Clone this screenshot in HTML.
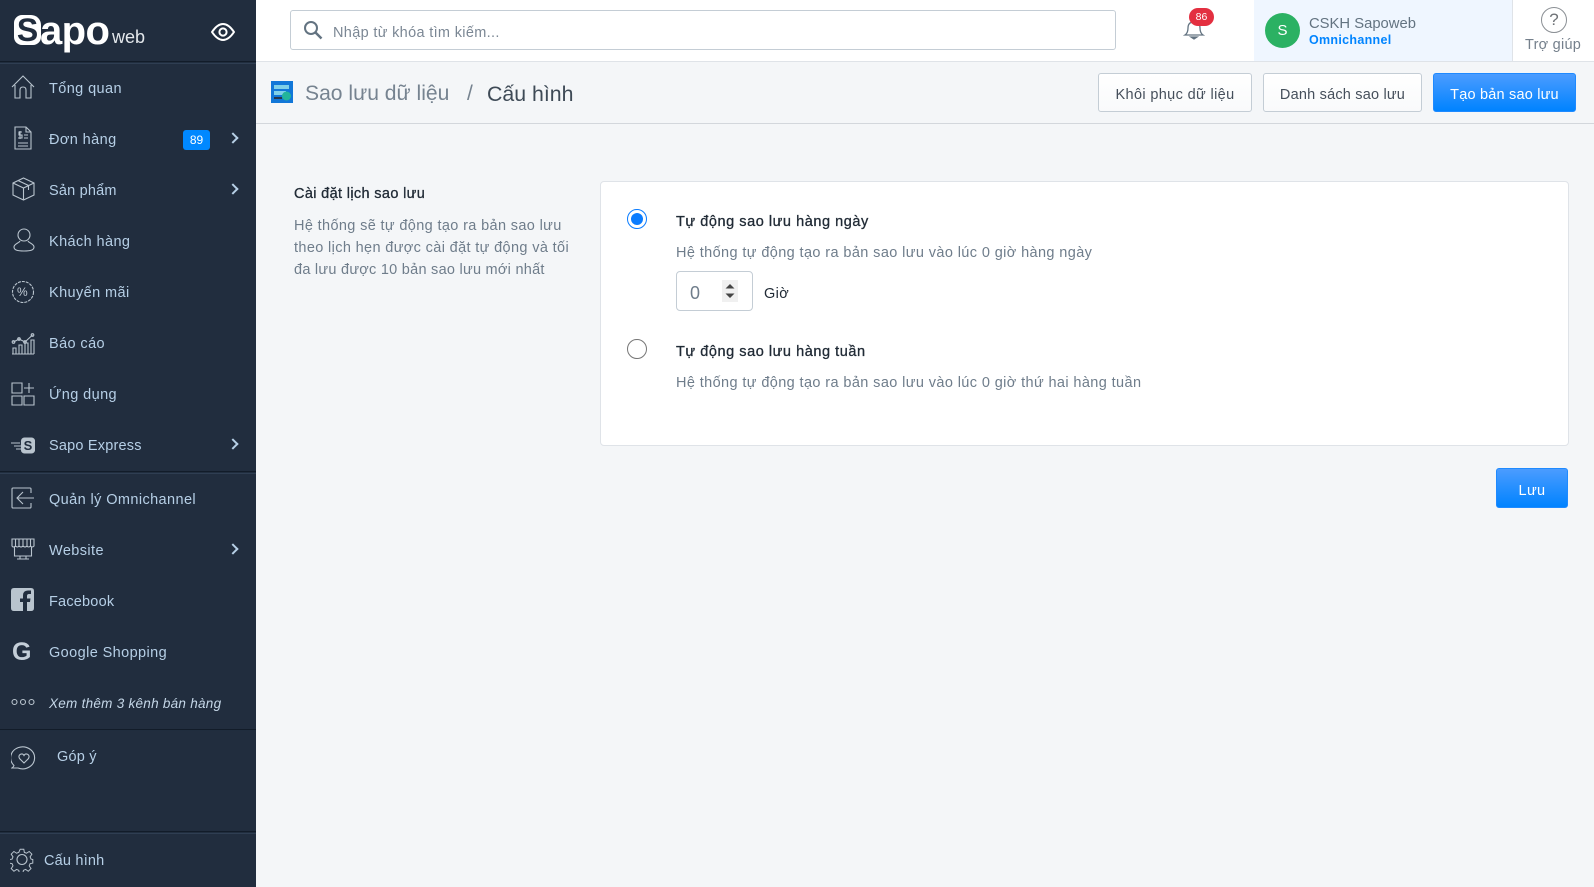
<!DOCTYPE html>
<html lang="vi"><head><meta charset="utf-8"><title>Sao lưu dữ liệu</title>
<style>
html,body{margin:0;padding:0}
body{width:1594px;height:887px;overflow:hidden;background:#f4f6f8;position:relative;font-family:"Liberation Sans","Noto Sans CJK SC",sans-serif;font-size:14.5px;color:#212b36;letter-spacing:.39px}
.t{position:absolute;white-space:nowrap;line-height:20px;height:20px}
.box{position:absolute;box-sizing:border-box;letter-spacing:0}
#side{position:absolute;left:0;top:0;width:256px;height:887px;background:#212d3e}
#side .t{left:49px;color:#b6cfe6;font-size:14.5px;letter-spacing:.4px;margin-top:1px}
#side svg{position:absolute;fill:none;stroke:#b9c4ce;stroke-width:1.1}
.chev{position:absolute;left:229px;width:6px;height:6px;border-top:2px solid #b6cfe6;border-right:2px solid #b6cfe6;transform:rotate(45deg)}
.div{position:absolute;left:0;width:256px;height:3px;background:linear-gradient(#121c29 0 1.5px,#2f3e52 1.5px)}
.btn{position:absolute;box-sizing:border-box;top:73px;height:39px;border-radius:3px;border:1px solid #c4cdd5;background:linear-gradient(#fff,#f9fafb);text-align:center;line-height:42px;color:#454f5b;font-size:14.5px}
.blue{background:linear-gradient(#4b9cff,#0083ff);border:1px solid #1f8aff;color:#fff}
.g{color:#6f7d8b}
.m{font-size:14.5px;-webkit-text-stroke:.3px #212b36;letter-spacing:.55px}
</style></head><body>
<div id="side">
 <div class="box" style="left:14px;top:15px;width:27px;height:30px;background:#fff;border-radius:8px 10px 8px 8px;color:#212d3e;font:bold 32px/30px 'Liberation Sans',sans-serif;text-align:center">S</div>
 <div class="t" style="left:40px!important;top:13px;margin:0;font:bold 40px/36px 'Liberation Sans',sans-serif;height:36px;letter-spacing:-.6px"><span style="color:#fff">apo</span></div>
 <div class="t" style="left:112px!important;top:26px;font-size:18px;letter-spacing:0"><span style="color:#e4e8ec">web</span></div>
 <svg style="left:211px;top:22px;stroke:#fff;stroke-width:2" width="24" height="20" viewBox="0 0 24 20"><path d="M1 10C5 4 9 2 12 2s7 2 11 8c-4 6-8 8-11 8s-7-2-11-8z"/><circle cx="12" cy="10" r="3.6"/></svg>
 <div class="div" style="top:61px"></div>

 <svg style="left:11px;top:75px" width="24" height="24" viewBox="0 0 24 24"><path d="M1 12L12 1l11 11M4 10v13h5v-8q0-3 3-3t3 3v8h5V10"/></svg>
 <div class="t" style="top:78px">Tổng quan</div>
 <svg style="left:14px;top:126px" width="18" height="24" viewBox="0 0 18 24"><path d="M1 1h11l5 5v17H1zM12 1v5h5M4 17h10M4 20h10M10 9h4M10 12h4M8 6H5v3h3v3H4M6 5v8"/></svg>
 <div class="t" style="top:129px">Đơn hàng</div>
 <div class="box" style="left:183px;top:130px;width:27px;height:20px;background:#0088ff;border-radius:3px;color:#fff;font-size:12px;line-height:20px;text-align:center">89</div>
 <div class="chev" style="top:134px"></div>
 <svg style="left:12px;top:177px" width="23" height="24" viewBox="0 0 23 24"><path d="M11.500 1L22 6v12l-10.500 5L1 18V6zM1 6l10.500 5L22 6M11.500 11v12M6 3.500l10.500 5V13"/></svg>
 <div class="t" style="top:180px;letter-spacing:.2px">Sản phẩm</div>
 <div class="chev" style="top:185px"></div>
 <svg style="left:13px;top:228px" width="22" height="24" viewBox="0 0 22 24"><circle cx="11" cy="7" r="6"/><path d="M7 13c-1 2-6 3-6 6 0 3 3 4 10 4s10-1 10-4c0-3-5-4-6-6"/></svg>
 <div class="t" style="top:231px">Khách hàng</div>
 <svg style="left:11px;top:280px" width="24" height="24" viewBox="0 0 24 24"><circle cx="12" cy="12" r="10.500" stroke-dasharray="3 1"/></svg>
 <div class="t" style="left:17px!important;top:281px;font-size:12px;letter-spacing:0"><span style="color:#c4ced8">%</span></div>
 <div class="t" style="top:282px">Khuyến mãi</div>
 <svg style="left:11px;top:331px" width="24" height="24" viewBox="0 0 24 24"><path d="M1 23h22M2 23v-6h3v6M8 23v-9h3v9M14 23V12h3v11M20 23V9h3v14M2.500 11L8 8l6 3 7.500-7"/><circle cx="2.500" cy="11" r="1.300"/><circle cx="8" cy="8" r="1.300"/><circle cx="14" cy="11" r="1.300"/><circle cx="21.500" cy="4" r="1.300"/></svg>
 <div class="t" style="top:333px">Báo cáo</div>
 <svg style="left:11px;top:382px" width="24" height="24" viewBox="0 0 24 24"><path d="M1 1h10v10H1zM1 14h10v9H1zM13 14h10v9H13zM13 6h10M18 1v10"/></svg>
 <div class="t" style="top:384px">Ứng dụng</div>
 <svg style="left:11px;top:437px" width="24" height="17" viewBox="0 0 24 17"><path d="M0 6h9M3 9h7M5 12h5"/><rect x="10.500" y="1" width="13" height="15" rx="3" fill="#b9c4ce"/></svg>
 <div class="box" style="left:21px;top:437px;width:14px;height:17px;color:#212d3e;font:bold 13px/17px 'Liberation Sans',sans-serif;text-align:center">S</div>
 <div class="t" style="top:435px;letter-spacing:.2px">Sapo Express</div>
 <div class="chev" style="top:440px"></div>
 <div class="div" style="top:471px"></div>
 <svg style="left:11px;top:487px" width="24" height="22" viewBox="0 0 24 22"><path d="M20 6V2q0-1-1-1H2Q1 1 1 2v18q0 1 1 1h17q1 0 1-1v-4M23 11H6M12 5l-6 6 6 6"/></svg>
 <div class="t" style="top:489px">Quản lý Omnichannel</div>
 <svg style="left:11px;top:537px" width="24" height="24" viewBox="0 0 24 24"><path d="M1 2h22v7q-2 2-3.500 0-2 2-3.500 0-2 2-4 0-2 2-4 0-1.500 2-3.500 0Q2 11 1 9zM4.500 2v7M8 2v7M12 2v7M16 2v7M19.500 2v7M3.500 10v9h17v-9M6 22h12M9 19v3M15 19v3"/></svg>
 <div class="t" style="top:540px">Website</div>
 <div class="chev" style="top:545px"></div>
 <svg style="left:11px;top:588px;stroke:none" width="23" height="23" viewBox="0 0 23 23"><path fill="#b9c4ce" d="M3 0h17q3 0 3 3v17q0 3-3 3h-4v-9h3l.5-3.500H16V8q0-2 2-2h2V2.500h-3q-5 0-5 5v3H9V14h3v9H3q-3 0-3-3V3q0-3 3-3z"/></svg>
 <div class="t" style="top:591px;letter-spacing:.2px">Facebook</div>
 <div class="t" style="left:12px!important;top:639px;height:26px;margin:0;letter-spacing:0;font:bold 25px/26px 'Liberation Sans',sans-serif"><span style="color:#c4ced8">G</span></div>
 <div class="t" style="top:642px">Google Shopping</div>
 <svg style="left:11px;top:697px" width="24" height="10" viewBox="0 0 24 10"><circle cx="3.500" cy="5" r="2.500"/><circle cx="12" cy="5" r="2.500"/><circle cx="20.500" cy="5" r="2.500"/></svg>
 <div class="t" style="top:693px;font-style:italic;font-size:13.500px;letter-spacing:.27px;color:#c5d7e8">Xem thêm 3 kênh bán hàng</div>
 <div class="div" style="top:729px;height:2px"></div>
 <svg style="left:11px;top:745px" width="26" height="26" viewBox="0 0 26 26"><path d="M3 20.500A12 11 0 1 1 7 23H1q1.500-1 2-2.500z"/><path d="M13 18l-4.500-4.500q-1.500-3 1-4.200 2.300-1 3.500 1.200 1.200-2.200 3.500-1.200 2.500 1.200 1 4.200z"/></svg>
 <div class="t" style="left:57px!important;top:746px;letter-spacing:.2px">Góp ý</div>
 <div class="div" style="top:831px"></div>
 <svg style="left:10px;top:847px" width="24" height="25" viewBox="0 0 24 25"><circle cx="12" cy="12.500" r="5"/><path d="M10 1h4l.6 3.500 2.400 1 3-2 3 3-2 3 1 2.500 2 .5v4l-3 .6-1 2.400 2 3-3 3-3-2-2.400 1-.6 3h-4l-.6-3-2.400-1-3 2-3-3 2-3-1-2.400-3-.6v-4l3-.5 1-2.500-2-3 3-3 3 2 2.400-1z" transform="translate(1.200 1.300) scale(.9)"/></svg>
 <div class="t" style="left:44px!important;top:850px;letter-spacing:.2px">Cấu hình</div>
</div>

<div class="box" style="left:256px;top:0;width:1338px;height:62px;background:#fff;border-bottom:1px solid #dfe3e8"></div>
<div class="box" style="left:290px;top:10px;width:826px;height:40px;background:#fff;border:1px solid #c4cdd5;border-radius:3px"></div>
<svg style="position:absolute;left:303px;top:20px" width="20" height="20" viewBox="0 0 20 20" fill="none" stroke="#637381" stroke-width="2"><circle cx="8" cy="8" r="6"/><path d="M12.500 12.500L18.500 18.500" stroke-width="2.500"/></svg>
<div class="t g" style="left:333px;top:23px;color:#7b8794;letter-spacing:.33px">Nhập từ khóa tìm kiếm...</div>

<svg style="position:absolute;left:1183px;top:18px" width="22" height="22" viewBox="0 0 22 22" fill="none" stroke="#637381" stroke-width="1.300"><path d="M2 17q3-2 3-7 0-6 6-6t6 6q0 5 3 7z"/><path d="M8 19h6l-3 2z" fill="#637381"/></svg>
<div class="box" style="left:1189px;top:8px;width:25px;height:18px;border-radius:9px;background:#e32f40;color:#fff;font-size:10.500px;line-height:18px;text-align:center">86</div>

<div class="box" style="left:1254px;top:0;width:259px;height:61px;background:#eff6ff"></div>
<div class="box" style="left:1265px;top:13px;width:35px;height:35px;border-radius:50%;background:#2bb163;color:#fff;font-size:15px;line-height:35px;text-align:center">S</div>
<div class="t" style="left:1309px;top:14px;color:#637381;font-size:14.8px;letter-spacing:0">CSKH Sapoweb</div>
<div class="t" style="left:1309px;top:30px;color:#0084ff;font-size:12.500px;font-weight:bold;letter-spacing:.3px">Omnichannel</div>
<div class="box" style="left:1512px;top:0;width:1px;height:61px;background:#dfe3e8"></div>
<div class="box" style="left:1541px;top:7px;width:26px;height:26px;border-radius:50%;border:1.500px solid #8a8f94;color:#6f7377;font-size:17px;line-height:23px;text-align:center">?</div>
<div class="t" style="left:1525px;top:35px;color:#75808c;font-size:14.500px;letter-spacing:.25px">Trợ giúp</div>

<svg style="position:absolute;left:271px;top:81px" width="22" height="22" viewBox="0 0 22 22"><rect width="22" height="22" fill="#1177d8"/><rect x="3" y="4" width="15" height="4" fill="#7fd0e8"/><rect x="3" y="10" width="12" height="4" fill="#7fd0e8"/><rect x="3" y="16" width="8" height="2" fill="#26364a"/><circle cx="15.500" cy="15" r="4.500" fill="#23b59a"/></svg>
<div class="t" style="left:305px;top:81px;font-size:21.1px;height:26px;line-height:26px;color:#768390;letter-spacing:0">Sao lưu dữ liệu</div>
<div class="t" style="left:467px;top:81px;font-size:21px;height:26px;line-height:26px;color:#768390;letter-spacing:0">/</div>
<div class="t" style="left:487px;top:81px;font-size:21.3px;height:26px;line-height:26px;color:#3e4a56;letter-spacing:0">Cấu hình</div>
<div class="btn" style="left:1098px;width:154px;letter-spacing:.36px">Khôi phục dữ liệu</div>
<div class="btn" style="left:1263px;width:159px;letter-spacing:.2px">Danh sách sao lưu</div>
<div class="btn blue" style="left:1433px;width:143px;letter-spacing:.2px">Tạo bản sao lưu</div>
<div class="box" style="left:256px;top:123px;width:1338px;height:1px;background:#d3d7dc"></div>

<div class="t m" style="left:294px;top:184px;letter-spacing:.35px">Cài đặt lịch sao lưu</div>
<div class="t g" style="left:294px;top:215px;line-height:22px;height:22px;letter-spacing:.36px">Hệ thống sẽ tự động tạo ra bản sao lưu</div>
<div class="t g" style="left:294px;top:237px;line-height:22px;height:22px;letter-spacing:.36px">theo lịch hẹn được cài đặt tự động và tối</div>
<div class="t g" style="left:294px;top:259px;line-height:22px;height:22px;letter-spacing:.26px">đa lưu được 10 bản sao lưu mới nhất</div>

<div class="box" style="left:600px;top:181px;width:969px;height:265px;background:#fff;border:1px solid #dfe3e8;border-radius:4px"></div>
<div class="box" style="left:627px;top:209px;width:20px;height:20px;border-radius:50%;border:1.500px solid #0a7cff"></div>
<div class="box" style="left:631px;top:213px;width:12px;height:12px;border-radius:50%;background:#0a7cff"></div>
<div class="t m" style="left:676px;top:212px">Tự động sao lưu hàng ngày</div>
<div class="t g" style="left:676px;top:243px">Hệ thống tự động tạo ra bản sao lưu vào lúc 0 giờ hàng ngày</div>
<div class="box" style="left:676px;top:271px;width:77px;height:40px;border:1px solid #c4cdd5;border-radius:4px;background:#fff"></div>
<div class="t g" style="left:690px;top:283px;font-size:18px;line-height:20px">0</div>
<div class="box" style="left:722px;top:280px;width:16px;height:22px;background:#f0f0f0"></div>
<svg style="position:absolute;left:724px;top:283px" width="12" height="16" viewBox="0 0 12 16" fill="#444"><path d="M6 1l4.500 4.500h-9zM6 15l4.500-4.500h-9z"/></svg>
<div class="t" style="left:764px;top:284px">Giờ</div>
<div class="box" style="left:627px;top:339px;width:20px;height:20px;border-radius:50%;border:1.300px solid #767676;background:#fff"></div>
<div class="t m" style="left:676px;top:342px">Tự động sao lưu hàng tuần</div>
<div class="t g" style="left:676px;top:373px">Hệ thống tự động tạo ra bản sao lưu vào lúc 0 giờ thứ hai hàng tuần</div>
<div class="btn blue" style="left:1496px;top:468px;width:72px;height:40px;line-height:44px">Lưu</div>
</body></html>
